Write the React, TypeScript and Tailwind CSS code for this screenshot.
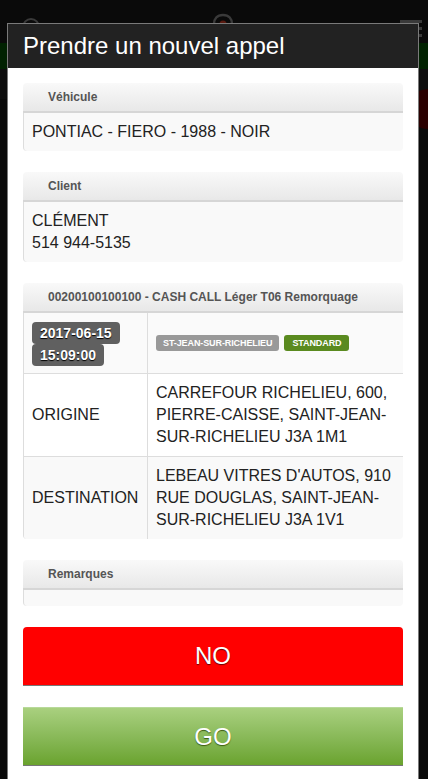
import React from "react";

const font = { fontFamily: '"Liberation Sans", Arial, sans-serif' };

function PanelHeader({ children }: { children: React.ReactNode }) {
  return (
    <div className="h-[30px] rounded-t-[4px] bg-gradient-to-b from-[#f9f9f9] to-[#e8e8e8] border-b-2 border-[#d6d6d6] pl-[25px] flex items-center text-[12px] font-bold text-[#555]">
      {children}
    </div>
  );
}

function Panel({ title, children, className = "" }: { title: string; children?: React.ReactNode; className?: string }) {
  return (
    <div className={"rounded-[4px] " + className}>
      <PanelHeader>{title}</PanelHeader>
      <div className="bg-[#f9f9f9] border-l border-[#dddddd] rounded-b-[4px] px-[8px] py-[8px] text-[16px] leading-[22px] text-[#222]">
        {children}
      </div>
    </div>
  );
}

export default function App() {
  return (
    <div className="relative w-[428px] h-[779px] overflow-hidden bg-[#0a0a0a]" style={font}>
      {/* background page (dimmed) */}
      <div className="flex flex-col">
        <div className="h-[43px] flex items-center justify-between px-[20px]">
          <svg width="26" height="26" viewBox="0 0 26 26" className="mt-[14px]">
            <circle cx="11" cy="11" r="8" fill="none" stroke="#3a3a3a" strokeWidth="2" />
            <line x1="17" y1="17" x2="24" y2="24" stroke="#3a3a3a" strokeWidth="3" />
          </svg>
          <svg width="22" height="30" viewBox="0 0 22 30" className="mt-[12px]">
            <path d="M11 2 C5 2 2 6 2 11 C2 17 11 28 11 28 C11 28 20 17 20 11 C20 6 17 2 11 2 Z" fill="none" stroke="#3a3a3a" strokeWidth="2.5" />
            <circle cx="11" cy="11" r="3.5" fill="#5a1a10" />
          </svg>
          <div className="flex flex-col gap-[4px] mt-[14px] mr-[-14px]">
            <div className="w-[22px] h-[3px] bg-[#3a3a3a]" />
            <div className="w-[22px] h-[3px] bg-[#3a3a3a]" />
            <div className="w-[22px] h-[3px] bg-[#3a3a3a]" />
          </div>
        </div>
        <div className="h-[26px] bg-[#012201]" />
        <div className="h-[30px] bg-[#0e0e0e]" />
        <div className="flex justify-end pr-[0px]">
          <div className="w-[40px] h-[40px] rounded-full bg-[#2a0000] mr-[-20px] mt-[-10px]" />
        </div>
      </div>

      {/* modal */}
      <div className="absolute left-[7px] top-[23px] w-[412px] h-[780px] border border-b-0 border-[#7a7a7a] bg-white flex flex-col">
        <div className="h-[44px] bg-[#222222] flex items-center pl-[15px] text-[24px] text-white leading-none">
          Prendre un nouvel appel
        </div>
        <div className="px-[15px] pt-[15px] flex flex-col">
          <Panel title="Véhicule">PONTIAC - FIERO - 1988 - NOIR</Panel>

          <Panel title="Client" className="mt-[21px]">
            <div>CLÉMENT</div>
            <div>514 944-5135</div>
          </Panel>

          <div className="mt-[21px] rounded-[4px]">
            <PanelHeader>00200100100100 - CASH CALL Léger T06 Remorquage</PanelHeader>
            <div className="border-l border-[#dddddd] text-[16px] leading-[22px] text-[#222] rounded-b-[4px] overflow-hidden">
              <div className="flex bg-[#fafafa]">
                <div className="w-[124px] shrink-0 border-r border-[#dddddd] px-[8px] pt-[9px] pb-[7px] flex flex-col items-start">
                  <span className="h-[22px] px-[8px] bg-[#606060] rounded-[4px] text-white font-bold text-[14px] leading-[22px] [text-shadow:0_1px_1px_#000]">2017-06-15</span>
                  <span className="h-[22px] px-[8px] bg-[#606060] rounded-[4px] text-white font-bold text-[14px] leading-[22px] [text-shadow:0_1px_1px_#000]">15:09:00</span>
                </div>
                <div className="flex-1 px-[8px] flex items-center gap-[5px]">
                  <span className="h-[16px] px-[7px] bg-[#999999] rounded-[3px] text-white font-bold text-[9px] tracking-[-0.1px] leading-[16px]">ST-JEAN-SUR-RICHELIEU</span>
                  <span className="h-[16px] px-[8px] bg-[#5a8a1f] rounded-[3px] text-white font-bold text-[9px] tracking-[-0.1px] leading-[16px]">STANDARD</span>
                </div>
              </div>
              <div className="flex bg-white border-t border-[#dddddd]">
                <div className="w-[124px] shrink-0 border-r border-[#dddddd] px-[8px] flex items-center">ORIGINE</div>
                <div className="flex-1 px-[8px] py-[8px]">
                  CARREFOUR RICHELIEU, 600, PIERRE-CAISSE, SAINT-JEAN-SUR-RICHELIEU J3A 1M1
                </div>
              </div>
              <div className="flex bg-[#f9f9f9] border-t border-[#dddddd]">
                <div className="w-[124px] shrink-0 border-r border-[#dddddd] px-[8px] flex items-center">DESTINATION</div>
                <div className="flex-1 px-[8px] py-[8px]">
                  LEBEAU VITRES D'AUTOS, 910 RUE DOUGLAS, SAINT-JEAN-SUR-RICHELIEU J3A 1V1
                </div>
              </div>
            </div>
          </div>

          <div className="mt-[21px] rounded-[4px]">
            <PanelHeader>Remarques</PanelHeader>
            <div className="h-[16px] bg-[#f9f9f9] border-l border-[#dddddd] rounded-b-[4px]" />
          </div>

          <button className="mt-[21px] h-[59px] bg-[#ff0000] rounded-t-[4px] border-b border-[#777] text-white text-[24px] flex items-center justify-center [text-shadow:0_1px_1px_#600]">
            NO
          </button>

          <button className="mt-[21px] h-[59px] bg-gradient-to-b from-[#a9d07f] to-[#6aa32d] border-t border-[#b8d99a] border-b border-b-[#777] text-white text-[24px] flex items-center justify-center [text-shadow:0_1px_1px_#3a5a10]">
            GO
          </button>
        </div>
      </div>
    </div>
  );
}
